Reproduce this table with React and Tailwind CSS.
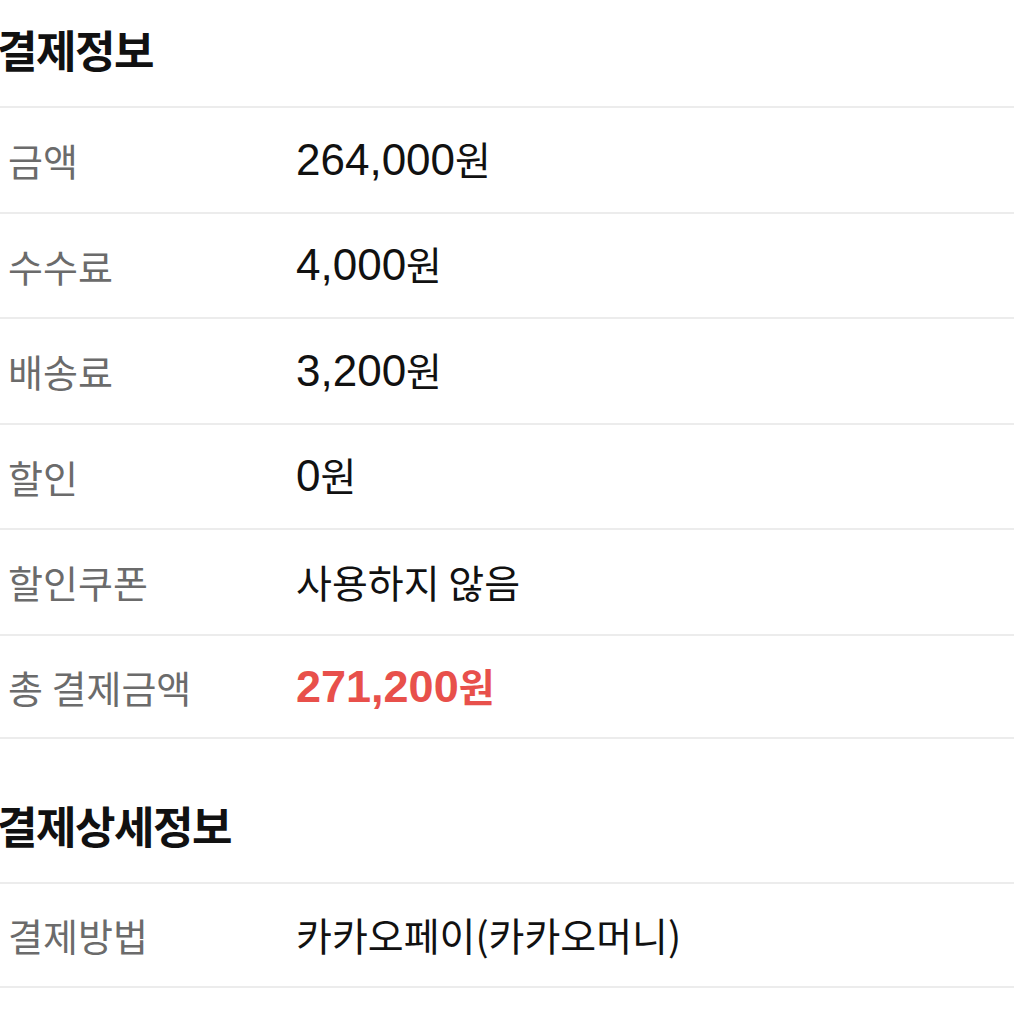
import React from 'react';

const ko = 'font-["Noto_Sans_CJK_KR",sans-serif]';

const Won = ({ value, bold }) => (
  <span
    className={`font-["Liberation_Sans","Noto_Sans_CJK_KR",sans-serif] ${bold ? 'font-bold text-[45px]' : 'text-[44px]'}`}
  >
    {value}
    <span className={`${ko} text-[39px]`}>원</span>
  </span>
);

const payRows = [
  { label: '금액', value: <Won value="264,000" /> },
  { label: '수수료', value: <Won value="4,000" /> },
  { label: '배송료', value: <Won value="3,200" /> },
  { label: '할인', value: <Won value="0" /> },
  {
    label: '할인쿠폰',
    value: <span className={`${ko} text-[39px]`}>사용하지 않음</span>
  },
  {
    label: '총 결제금액',
    value: (
      <span className="text-[#e8504b]">
        <Won value="271,200" bold />
      </span>
    )
  }
];

const detailRows = [
  {
    label: '결제방법',
    value: <span className={`${ko} text-[39px]`}>카카오페이(카카오머니)</span>
  }
];

const Row = ({ label, value, last }) => (
  <div
    className={`flex items-center h-[105.5px] border-t-2 border-[#ececec] ${last ? 'border-b-2' : ''}`}
  >
    <div className={`w-[296px] pl-[8px] shrink-0 ${ko} text-[38px] text-[#6b6b6b]`}>
      {label}
    </div>
    <div className="text-[#111111] leading-none">{value}</div>
  </div>
);

const Section = ({ title, rows, headHeight }) => (
  <section>
    <div className={`flex items-center ${headHeight}`}>
      <h2 className={`-ml-[3px] ${ko} font-bold text-[44px] tracking-[-1.5px] text-[#111111]`}>
        {title}
      </h2>
    </div>
    {rows.map((row, i) => (
      <Row key={row.label} {...row} last={i === rows.length - 1} />
    ))}
  </section>
);

export default function App() {
  return (
    <div className="w-[1014px] h-[1014px] bg-white overflow-hidden">
      <Section title="결제정보" rows={payRows} headHeight="h-[106px] pb-[8px]" />
      <Section title="결제상세정보" rows={detailRows} headHeight="h-[143px] pt-[29px]" />
    </div>
  );
}
